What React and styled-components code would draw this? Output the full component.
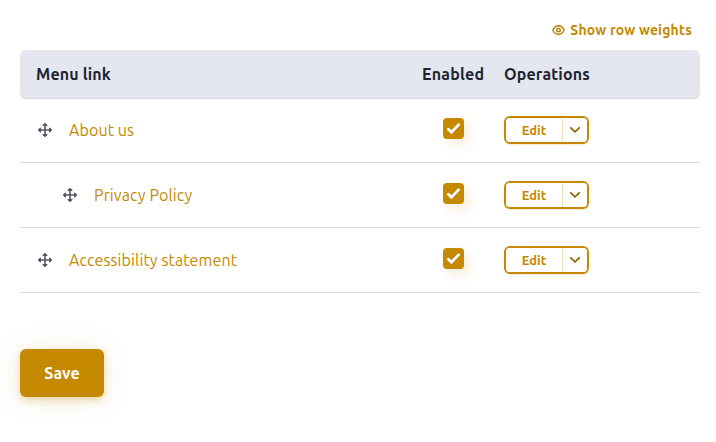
import React, { useState } from "react";
import styled, { createGlobalStyle } from "styled-components";

const gold = "#c48900";

const GlobalStyle = createGlobalStyle`
  * { box-sizing: border-box; }
  body {
    margin: 0;
    background: #fff;
    color: #222330;
    font: 400 16px/24px Ubuntu, "Noto Sans", sans-serif;
  }
`;

const Page = styled.main`
  width: 716px;
  height: 442px;
  padding: 0 16px 0 20px;
  overflow: hidden;
`;

const Toolbar = styled.div`
  display: flex;
  justify-content: flex-end;
  height: 50px;
  padding: 20px 8px 0 0;
`;

const Label = styled.span`
  display: inline-block;
  white-space: nowrap;
  letter-spacing: ${(p) => p.$spacing || 0}px;
`;

const WeightToggle = styled.button`
  display: flex;
  align-items: center;
  gap: 5px;
  height: 20px;
  padding: 0;
  border: 0;
  background: none;
  color: ${gold};
  font: 700 14px/20px Ubuntu, "Noto Sans", sans-serif;
`;

const Table = styled.section`
  width: 680px;
`;

const Row = styled.div`
  display: grid;
  grid-template-columns: 392px 82px 1fr;
  align-items: center;
  height: 65px;
  padding: 0 10px 1px 16px;
  border-bottom: 1px solid #d9dadc;
`;

const HeaderRow = styled(Row)`
  height: 49px;
  margin-bottom: -1px;
  padding-bottom: 0;
  background: #e4e7f0;
  border-radius: 6px;
  font-weight: 700;
  grid-template-columns: 386px 82px 1fr;
`;

const LinkCell = styled.div`
  display: flex;
  align-items: center;
  gap: 15px;
  padding-left: ${(p) => p.$depth * 25}px;
`;

const DragHandle = styled.svg`
  flex: none;
  width: 18px;
  height: 18px;
`;

const MenuLink = styled.a`
  color: ${gold};
  font-weight: 450;
  text-decoration: none;
`;

const EnabledCell = styled.div`
  display: flex;
  padding: 0 0 3px 15px;
`;

const Checkbox = styled.button`
  display: grid;
  place-items: center;
  width: 21px;
  height: 21px;
  padding: 0;
  border: 0;
  border-radius: 4px;
  background: ${gold};
  box-shadow: 4px 5px 12px rgba(196, 137, 0, 0.16);
`;

const SplitButton = styled.div`
  display: flex;
  width: 85px;
  height: 28px;
  margin-left: -6px;
  border: 2px solid ${gold};
  border-radius: 6px;
  box-shadow: 0 1px 2px rgba(196, 137, 0, 0.2);
  overflow: hidden;
`;

const EditButton = styled.button`
  width: 56px;
  padding: 0;
  border: 0;
  background: #fff;
  color: ${gold};
  font: 700 13px/24px Ubuntu, "Noto Sans", sans-serif;
`;

const MoreButton = styled.button`
  display: grid;
  place-items: center;
  flex: 1;
  padding: 0;
  border: 0;
  border-left: 1px solid #f0dfb8;
  background: #fff;
`;

const SaveButton = styled.button`
  width: 84px;
  height: 48px;
  margin-top: 56px;
  padding: 0;
  border: 0;
  border-radius: 6px;
  background: ${gold};
  color: #fff;
  font: 700 16px/48px Ubuntu, "Noto Sans", sans-serif;
  box-shadow: 0 3px 7px rgba(196, 137, 0, 0.3), 0 2px 28px rgba(196, 137, 0, 0.15);
`;

const EyeIcon = () => (
  <svg width="13" height="12" viewBox="0 0 13 12" fill="none" stroke="#b47e00" strokeWidth="1.4">
    <path d="M.8 6C2 3.3 4 1.7 6.5 1.7S11 3.3 12.2 6C11 8.7 9 10.3 6.5 10.3S2 8.7.8 6Z" />
    <circle cx="6.5" cy="6" r="1.8" />
  </svg>
);

const MoveIcon = () => (
  <DragHandle viewBox="0 0 18 18">
    <path d="M9 3v12M3 9h12" stroke="#555763" strokeWidth="1.6" />
    <path
      d="M9 2.2 11.2 4.4H6.8zM9 15.8 6.8 13.6h4.4zM2.2 9 4.4 6.8v4.4zM15.8 9 13.6 11.2V6.8z"
      fill="#555763"
      stroke="#555763"
      strokeWidth="1"
      strokeLinejoin="round"
    />
  </DragHandle>
);

const CheckIcon = () => (
  <svg width="15" height="13" viewBox="0 0 15 13" fill="none" stroke="#fff" strokeWidth="2.7" strokeLinecap="round">
    <path d="m2.4 7.2 3 3L12.7 2.6" />
  </svg>
);

const ChevronIcon = () => (
  <svg width="12" height="8" viewBox="0 0 12 8" fill="none" stroke="#936700" strokeWidth="1.8" strokeLinecap="round">
    <path d="m1.8 1.8 4.2 4 4.2-4" />
  </svg>
);

const items = [
  { title: "About us", depth: 0, spacing: 0.1 },
  { title: "Privacy Policy", depth: 1, spacing: 0.12 },
  { title: "Accessibility statement", depth: 0, spacing: 0.12 },
];

function MenuRow({ item }) {
  const [enabled, setEnabled] = useState(true);
  return (
    <Row>
      <LinkCell $depth={item.depth}>
        <MoveIcon />
        <MenuLink href="#"><Label $spacing={item.spacing}>{item.title}</Label></MenuLink>
      </LinkCell>
      <EnabledCell>
        <Checkbox role="checkbox" aria-checked={enabled} aria-label={`Enable ${item.title}`} onClick={() => setEnabled(!enabled)}>
          {enabled && <CheckIcon />}
        </Checkbox>
      </EnabledCell>
      <SplitButton>
        <EditButton><Label>Edit</Label></EditButton>
        <MoreButton aria-label="More operations"><ChevronIcon /></MoreButton>
      </SplitButton>
    </Row>
  );
}

export default function App() {
  return (
    <>
      <GlobalStyle />
      <Page>
        <Toolbar>
          <WeightToggle><EyeIcon /><Label $spacing={0.18}>Show row weights</Label></WeightToggle>
        </Toolbar>
        <Table>
          <HeaderRow>
            <Label $spacing={0.15}>Menu link</Label>
            <Label $spacing={0.2}>Enabled</Label>
            <Label $spacing={0.15}>Operations</Label>
          </HeaderRow>
          {items.map((item) => <MenuRow key={item.title} item={item} />)}
        </Table>
        <SaveButton><Label>Save</Label></SaveButton>
      </Page>
    </>
  );
}
